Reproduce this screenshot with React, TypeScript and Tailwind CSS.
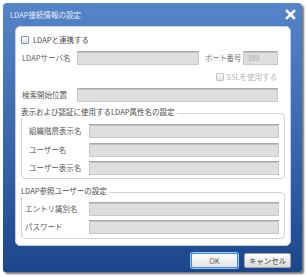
import React from 'react';

const font = "font-['Noto_Sans_CJK_JP','Noto_Sans',sans-serif]";

function Field({ className = '', value = '' }: { className?: string; value?: string }) {
  return (
    <div
      className={`h-[14px] bg-[#dedede] border border-[#c9c9c9] border-t-[#a9a9a9] shadow-[inset_0_1px_0_#c2c2c2] flex items-center px-[3px] text-[7.5px] text-[#b0b0b0] ${className}`}
    >
      {value}
    </div>
  );
}

function Check({ disabled = false }: { disabled?: boolean }) {
  return (
    <span
      className={`w-[8px] h-[8px] rounded-[1px] border shrink-0 ${
        disabled
          ? 'border-[#c4c4c4] bg-gradient-to-b from-[#fafafa] to-[#e2e2e2]'
          : 'border-[#7d93b8] bg-gradient-to-b from-white to-[#d9dfe9]'
      }`}
    />
  );
}

function Row({ label, labelW }: { label: string; labelW: string }) {
  return (
    <div className="flex items-center h-[14px]">
      <span className={`${labelW} shrink-0 whitespace-nowrap text-[#5a5a5a]`}>{label}</span>
      <Field className="w-[190px]" />
    </div>
  );
}

export default function App() {
  return (
    <div className={`w-[308px] h-[277px] bg-white pt-[3px] pl-[3px] ${font} leading-none`}>
      <div className="w-[299px] h-[269px] rounded-t-[4px] rounded-b-[2px] bg-gradient-to-b from-[#5684c8] via-[#3b68ad] to-[#1b468c] shadow-[2px_2px_2px_rgba(0,0,0,0.55)] flex flex-col">
        <div className="h-[23px] flex items-center justify-between pl-[7px] pr-[6px]">
          <span className="text-[7.5px] text-[#e6edf8]">LDAP接続情報の設定</span>
          <svg width="11" height="11" viewBox="0 0 11 11">
            <path d="M2 2 L9 9 M9 2 L2 9" stroke="white" strokeWidth="2.6" strokeLinecap="square" />
          </svg>
        </div>

        <div className="ml-[12px] w-[276px] h-[220px] bg-white rounded-[5px] border border-[#c4d0e2] flex flex-col text-[7.5px] whitespace-nowrap">
          <div className="mt-[9px] ml-[5px] flex items-center gap-[4px] h-[8px]">
            <Check />
            <span className="text-[#4a4a4a]">LDAPと連携する</span>
          </div>

          <div className="mt-[7px] flex items-center h-[14px]">
            <span className="w-[61px] shrink-0 pl-[6px] text-[#5a5a5a]">LDAPサーバ名</span>
            <Field className="w-[122px] shrink-0" />
            <span className="ml-[6px] w-[38px] shrink-0 tracking-[-0.3px] text-[#7a7a7a]">ポート番号</span>
            <Field className="w-[35px] shrink-0" value="389" />
          </div>

          <div className="mt-[8px] h-[8px] flex items-center justify-end pr-[13px] gap-[3px]">
            <Check disabled />
            <span className="text-[#b4b4b4]">SSLを使用する</span>
          </div>

          <div className="mt-[7px] flex items-center h-[14px]">
            <span className="w-[61px] shrink-0 pl-[6px] text-[#5a5a5a]">検索開始位置</span>
            <Field className="w-[201px] shrink-0" />
          </div>

          <fieldset className="mt-[6px] ml-[5px] w-[264px] border border-[#d4d4d4] rounded-[4px] pb-[3px]">
            <legend className="-ml-[1px] pr-[3px] h-[10px] text-[#4a4a4a]">表示および認証に使用するLDAP属性名の設定</legend>
            <div className="mt-[6px] flex flex-col gap-[4.5px]">
              <Row label="組織階層表示名" labelW="w-[67px] pl-[7px]" />
              <Row label="ユーザー名" labelW="w-[67px] pl-[7px]" />
              <Row label="ユーザー表示名" labelW="w-[67px] pl-[7px]" />
            </div>
          </fieldset>

          <fieldset className="mt-[8px] ml-[5px] w-[264px] border border-[#d4d4d4] rounded-[4px] pb-[4px]">
            <legend className="-ml-[1px] pr-[3px] h-[10px] text-[#4a4a4a]">LDAP参照ユーザーの設定</legend>
            <div className="mt-[5px] flex flex-col gap-[4px]">
              <Row label="エントリ識別名" labelW="w-[67px] pl-[3px]" />
              <Row label="パスワード" labelW="w-[67px] pl-[3px]" />
            </div>
          </fieldset>
        </div>

        <div className="mt-[7px] flex justify-end gap-[6px] pr-[11px]">
          <button className="w-[47px] h-[15px] rounded-[2px] border border-[#3a8de6] bg-gradient-to-b from-white to-[#e4e4e4] text-[7.5px] text-[#555] shadow-[0_0_0_1px_#9cc8f4]">
            OK
          </button>
          <button className="w-[47px] h-[15px] rounded-[2px] border border-[#a6a6a6] bg-gradient-to-b from-white to-[#dadada] text-[7.5px] text-[#444]">
            キャンセル
          </button>
        </div>
      </div>
    </div>
  );
}
